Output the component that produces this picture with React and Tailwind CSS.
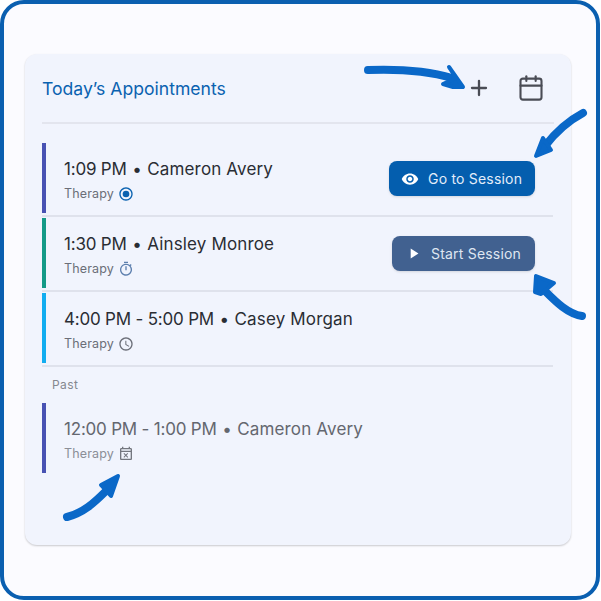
import { Calendar, Plus } from "lucide-react";
import {
  MdOutlineAccessTime,
  MdOutlineEventBusy,
  MdOutlineRadioButtonChecked,
  MdOutlineTimer,
  MdPlayArrow,
  MdVisibility,
} from "react-icons/md";

const Row = ({ bar, time, name, icon, muted, children }) => (
  <div className="flex items-center h-[70px]">
    <div className={`w-[4px] h-[70px] ${bar}`} />
    <div className="ml-[18px] flex-1 mt-[3px]">
      <p className={`flex text-[17px] leading-[24px] ${muted ? "text-[#64676f]" : "text-[#2a2d34]"}`}>
        <span className="tracking-[-0.2px]">{time}</span>
        <span className="mx-[5.5px]">•</span>
        <span className="tracking-[0.15px]">{name}</span>
      </p>
      <div className="flex items-center gap-[5px] mt-[4px]">
        <span className={`text-[12.5px] leading-[18px] tracking-[0.15px] ${muted ? "text-[#8b8e97]" : "text-[#6b6e78]"}`}>Therapy</span>
        {icon}
      </div>
    </div>
    {children}
  </div>
);

const Divider = () => <div className="h-[2px] bg-[#dfe2ec] mt-[2px] mb-[1px]" />;

export default function App() {
  return (
    <div className="relative w-[601px] h-[601px] bg-white overflow-hidden font-['Inter',sans-serif]">
      <div className="w-[600px] h-[600px] bg-[#fbfbff] border-[4px] border-[#0a5fb0] rounded-[24px] pt-[50px] pl-[21px]">
        <div className="w-[546px] h-[491px] bg-[#f1f4fd] rounded-[12px] shadow-[0_1px_2px_rgba(0,0,0,0.2)] px-[17px]">
          <div className="flex items-center h-[70px] border-b-2 border-[#e3e5ee]">
            <h2 className="text-[17.6px] text-[#0a62b0] flex-1 mt-[2px]">Today’s Appointments</h2>
            <Plus className="w-[24px] h-[24px] text-[#4a4c55] mr-[26px]" strokeWidth={2.3} />
            <Calendar className="w-[28px] h-[28px] text-[#4a4c55] mr-[9px]" strokeWidth={1.8} />
          </div>
          <div className="w-[511px] mt-[19px]">
            <Row
              bar="bg-[#4852b3]"
              time="1:09 PM"
              name="Cameron Avery"
              icon={<MdOutlineRadioButtonChecked className="w-[16px] h-[16px] text-[#0a62b0] -ml-[1px]" />}
            >
              <button className="flex items-center w-[146px] h-[35px] mr-[18px] pl-[12px] rounded-[8px] bg-[#045eae] text-[#e3edfa] text-[14px] tracking-[0.2px] shadow-sm mt-[1px]">
                <MdVisibility className="w-[18px] h-[18px] mr-[9px] text-white" />
                Go to Session
              </button>
            </Row>
            <Divider />
            <Row
              bar="bg-[#149a87]"
              time="1:30 PM"
              name="Ainsley Monroe"
              icon={<MdOutlineTimer className="w-[16px] h-[16px] text-[#5d7fae] -ml-[1px]" />}
            >
              <button className="flex items-center w-[143px] h-[35px] mr-[18px] pl-[13px] rounded-[8px] bg-[#416190] text-[#dfe6f2] text-[14px] tracking-[0.2px] shadow-sm mt-[1px]">
                <MdPlayArrow className="w-[17px] h-[17px] mr-[9px] text-white" />
                Start Session
              </button>
            </Row>
            <Divider />
            <Row
              bar="bg-[#12adf0]"
              time="4:00 PM - 5:00 PM"
              name="Casey Morgan"
              icon={<MdOutlineAccessTime className="w-[16px] h-[16px] text-[#6b6e78] -ml-[1px]" />}
            />
            <Divider />
            <p className="text-[12px] leading-[16px] tracking-[0.4px] text-[#85888f] ml-[10px] mt-[10px] mb-[10px]">Past</p>
            <Row
              muted
              bar="bg-[#4852b3]"
              time="12:00 PM - 1:00 PM"
              name="Cameron Avery"
              icon={<MdOutlineEventBusy className="w-[16px] h-[16px] text-[#74777f] -ml-[1px]" />}
            />
          </div>
        </div>
      </div>
      {/* hand drawn arrows on top of the screenshot */}
      <svg className="absolute left-0 top-0 pointer-events-none" width="601" height="601" fill="#0a68c8" stroke="#0a68c8" strokeLinecap="round" strokeLinejoin="round">
        <path d="M368 70 C395 69 425 70 452 78" strokeWidth="8" fill="none" />
        <path d="M449 67 L463 87 L453 87 L443 84 L456 78 Z" strokeWidth="4" />
        <path d="M583 113 C568 121 555 133 545 146" strokeWidth="8" fill="none" />
        <path d="M543 138 L536 156 L551 150 Z" strokeWidth="4" />
        <path d="M582 316 C568 314 556 302 545 291" strokeWidth="8" fill="none" />
        <path d="M536 276 L535 292 L541 294 L554 283 Z" strokeWidth="4" />
        <path d="M67 517 C83 513 94 503 106 491" strokeWidth="8" fill="none" />
        <path d="M118 476 L101 485 L111 496 Z" strokeWidth="4" />
      </svg>
    </div>
  );
}
